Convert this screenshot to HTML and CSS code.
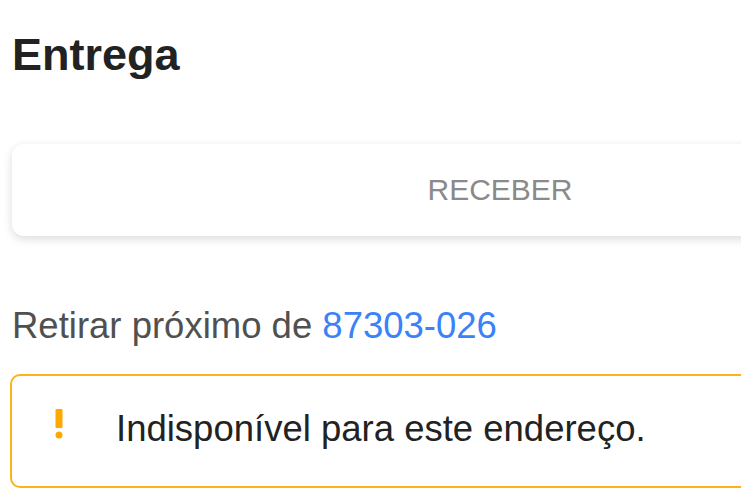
FILE: index.html
```html
<!DOCTYPE html>
<html lang="pt-BR">
<head>
    <meta charset="UTF-8">
    <meta name="viewport" content="width=device-width, initial-scale=1">
    <title>Entrega</title>
    <link rel="stylesheet" href="styles.css">
</head>
<body>
    <div class="delivery">
        <h1 class="title">Entrega</h1>
        <div class="option-card">
            <span class="option-label">RECEBER</span>
        </div>
        <p class="pickup">Retirar próximo de <a class="zip" href="#">87303-026</a></p>
        <div class="alert">
            <svg class="alert-icon" width="10" height="30" viewBox="0 0 10 30">
                <rect x="1.5" y="0" width="7" height="19" rx="1"/>
                <circle cx="5" cy="26" r="3.5"/>
            </svg>
            <span class="alert-text">Indisponível para este endereço.</span>
        </div>
    </div>
</body>
</html>
```

FILE: styles.css
```css
body {
    font-family: Arial, "Liberation Sans", sans-serif;
    background-color: #fff;
    margin: 0;
    overflow: hidden;
}
.delivery {
    width: 1000px;
    padding-left: 12px;
    display: flex;
    flex-direction: column;
}
.title {
    margin: 0;
    padding-top: 28px;
    font-size: 45px;
    line-height: 54px;
    font-weight: bold;
    color: #222;
}
.option-card {
    margin-top: 62px;
    width: 976px;
    height: 92px;
    background-color: #fff;
    border-radius: 12px;
    box-shadow: 0 3px 10px rgba(0, 0, 0, 0.14);
    display: flex;
    justify-content: center;
    align-items: center;
}
.option-label {
    font-size: 30px;
    color: #8a8a8a;
}
.pickup {
    margin: 68px 0 0;
    font-size: 36.5px;
    line-height: 43px;
    color: #505050;
}
.zip {
    color: #3b82f6;
    text-decoration: none;
}
.alert {
    margin: 27px 0 0 -2px;
    height: 114px;
    box-sizing: border-box;
    border: 2px solid #fbb416;
    border-radius: 10px;
    padding: 31px 0 0 42px;
    display: flex;
    align-items: flex-start;
}
.alert-icon {
    fill: #ffa800;
    margin-top: 2px;
}
.alert-text {
    margin-left: 52px;
    font-size: 36.5px;
    line-height: 43px;
    color: #222;
}
```
